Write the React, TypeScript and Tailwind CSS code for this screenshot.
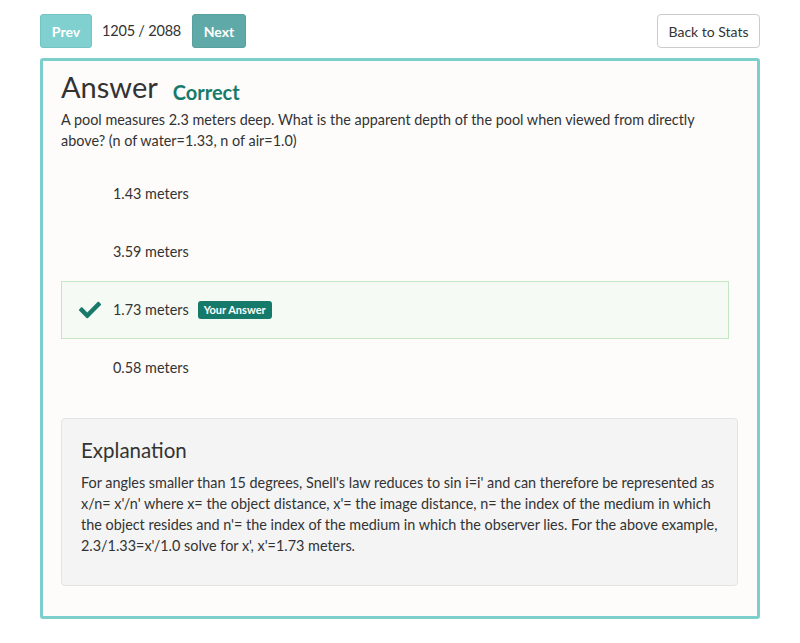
import { FaCheck } from "react-icons/fa";

const options = [
  { label: "1.43 meters", mine: false },
  { label: "3.59 meters", mine: false },
  { label: "1.73 meters", mine: true },
  { label: "0.58 meters", mine: false },
];

const App = () => {
  return (
    <div
      className="min-h-[643px] bg-white px-10 pt-[14px] text-[#333]"
      style={{ fontFamily: "Lato, 'Open Sans', sans-serif" }}
    >
      {/* Top nav */}
      <div className="flex h-[34px] items-center">
        <button className="h-[34px] w-[52px] rounded-[3px] border border-[#74c4c3] bg-[#80d0cf] text-[14px] font-bold text-white">
          Prev
        </button>
        <span className="ml-[10px] w-[80px] text-[14.5px] tracking-[-0.2px] text-[#333]">1205 / 2088</span>
        <button className="ml-[10px] h-[34px] w-[54px] rounded-[3px] border border-[#58a19f] bg-[#5faaa8] text-[14px] font-bold text-white">
          Next
        </button>
        <button className="ml-auto h-[34px] w-[103px] rounded-[4px] border border-[#ccc] bg-white text-[14px] text-[#333]">
          Back to Stats
        </button>
      </div>

      {/* Answer card */}
      <div className="mt-[10px] rounded-[3px] border-[3px] border-[#7dcfcc] bg-[#fdfcfb] pb-[30px] pl-[18px] pr-[19px] pt-[8px]">
        <div className="flex items-end">
          <h2 className="text-[29px] leading-[36px] text-[#333]">Answer</h2>
          <span className="mb-[-1px] ml-[15px] text-[20px] font-bold leading-[28px] text-[#167a6a]">
            Correct
          </span>
        </div>
        <p className="mt-[4px] text-[14.4px] leading-[21px] text-[#333]">
          A pool measures 2.3 meters deep. What is the apparent depth of the pool when viewed from directly
          <br />
          above? (n of water=1.33, n of air=1.0)
        </p>

        <div className="mr-[9px] mt-[14px] flex flex-col">
          {options.map((o) => (
            <div
              key={o.label}
              className={
                o.mine
                  ? "flex h-[58px] items-center border border-[#c3e6c3] bg-[#f5faf5]"
                  : "flex h-[58px] items-center border border-transparent"
              }
            >
              <div className="flex w-[51px] justify-end pr-[12px]">
                {o.mine && <FaCheck className="h-[22px] w-[22px] text-[#1a7a6a]" />}
              </div>
              <span className="text-[14.4px] text-[#333]">{o.label}</span>
              {o.mine && (
                <span className="ml-[9px] rounded-[3px] bg-[#167a6a] px-[6px] py-[3px] text-[11px] font-bold leading-[12px] text-white">
                  Your Answer
                </span>
              )}
            </div>
          ))}
        </div>

        {/* Explanation */}
        <div className="mt-[21px] h-[168px] rounded-[4px] border border-[#e3e3e3] bg-[#f4f4f4] px-[19px] pt-[17px]">
          <h3 className="text-[20.5px] leading-[28px] text-[#333]">Explanation</h3>
          <p className="mt-[8px] text-[14.4px] leading-[21px] text-[#333]">
            For angles smaller than 15 degrees, Snell's law reduces to sin i=i' and can therefore be represented as
            <br />
            x/n= x'/n' where x= the object distance, x'= the image distance, n= the index of the medium in which
            <br />
            the object resides and n'= the index of the medium in which the observer lies. For the above example,
            <br />
            2.3/1.33=x'/1.0 solve for x', x'=1.73 meters.
          </p>
        </div>
      </div>
    </div>
  );
};

export default App;
